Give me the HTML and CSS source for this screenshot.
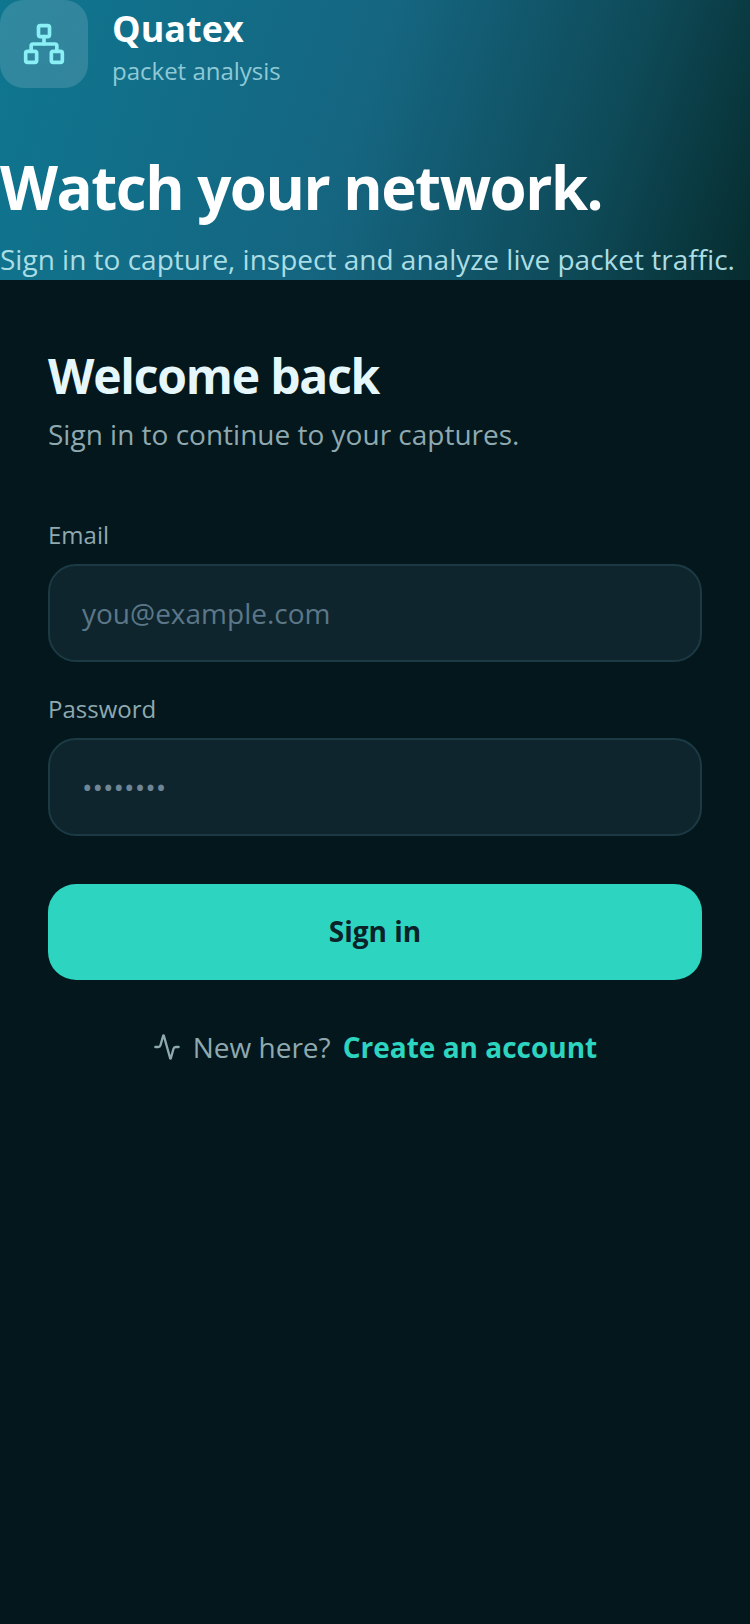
FILE: index.html
```html
<!DOCTYPE html>
<html lang="en">
<head>
    <meta charset="UTF-8">
    <title>Quatex</title>
    <link rel="stylesheet" href="styles.css">
</head>
<body>
    <div class="hero">
        <div class="brand">
            <div class="brandicon">
                <svg width="44" height="44" viewBox="0 0 24 24" fill="none" stroke="#8af0f5" stroke-width="2" stroke-linecap="round" stroke-linejoin="round">
                    <rect x="9" y="2" width="6" height="6" rx="1"></rect>
                    <rect x="16" y="16" width="6" height="6" rx="1"></rect>
                    <rect x="2" y="16" width="6" height="6" rx="1"></rect>
                    <path d="M5 16v-3a1 1 0 0 1 1-1h12a1 1 0 0 1 1 1v3"></path>
                    <path d="M12 12V8"></path>
                </svg>
            </div>
            <div class="brandtext">
                <div class="brandname">Quatex</div>
                <div class="brandsub">packet analysis</div>
            </div>
        </div>
        <div class="herotitle">Watch your network.</div>
        <div class="herosub">Sign in to capture, inspect and analyze live packet traffic.</div>
    </div>

    <div class="form">
        <div class="formtitle">Welcome back</div>
        <div class="formsub">Sign in to continue to your captures.</div>

        <div class="fieldlabel firstlabel">Email</div>
        <div class="fieldinput">you@example.com</div>

        <div class="fieldlabel">Password</div>
        <div class="fieldinput dots">••••••••</div>

        <div class="signinbtn">Sign in</div>

        <div class="signup">
            <svg width="28" height="28" viewBox="0 0 24 24" fill="none" stroke="#8fa9b0" stroke-width="2" stroke-linecap="round" stroke-linejoin="round">
                <path d="M22 12h-2.48a2 2 0 0 0-1.93 1.46l-2.35 8.36a.25.25 0 0 1-.48 0L9.24 2.18a.25.25 0 0 0-.48 0l-2.35 8.36A2 2 0 0 1 4.49 12H2"></path>
            </svg>
            <span class="signupq">New here?</span>
            <span class="signuplink">Create an account</span>
        </div>
    </div>
</body>
</html>
```

FILE: styles.css
```css
html, body{
    margin: 0;
    padding: 0;
}

body{
    width: 750px;
    height: 1624px;
    overflow: hidden;
    background: #04171c;
    font-family: "Open Sans", "Noto Sans", sans-serif;
}

.hero{
    height: 280px;
    box-sizing: border-box;
    background: linear-gradient(108deg, #0f7690 0%, #156580 48%, #0e4a58 78%, #062c2e 100%);
}

.brand{
    display: flex;
    align-items: flex-start;
    height: 88px;
}

.brandicon{
    width: 88px;
    height: 88px;
    border-radius: 24px;
    background: rgba(255, 255, 255, 0.14);
    display: flex;
    align-items: center;
    justify-content: center;
}

.brandtext{
    margin-left: 24px;
}

.brandname{
    font-size: 36px;
    line-height: 58px;
    font-weight: 700;
    color: #ffffff;
}

.brandsub{
    font-size: 24px;
    line-height: 26px;
    color: #8fc9d6;
}

.herotitle{
    margin-top: 63px;
    font-size: 60px;
    line-height: 72px;
    font-weight: 700;
    letter-spacing: -1.5px;
    color: #ffffff;
}

.herosub{
    margin-top: 16px;
    font-size: 28px;
    line-height: 40px;
    color: #aadde4;
    white-space: nowrap;
}

.form{
    padding: 66px 48px 0;
}

.formtitle{
    font-size: 48px;
    line-height: 60px;
    font-weight: 700;
    letter-spacing: -1.2px;
    color: #e6f7fb;
}

.formsub{
    margin-top: 8px;
    font-size: 28px;
    line-height: 40px;
    color: #8fa9b0;
}

.fieldlabel{
    margin-top: 29px;
    font-size: 24px;
    line-height: 36px;
    color: #8fa9b0;
}

.firstlabel{
    margin-top: 63px;
}

.fieldinput{
    margin-top: 11px;
    height: 98px;
    box-sizing: border-box;
    padding: 0 32px;
    border: 2px solid #1c3a44;
    border-radius: 28px;
    background: #0f252d;
    font-size: 28px;
    line-height: 94px;
    color: #5b7788;
}

.dots{
    color: #6f8696;
}

.signinbtn{
    margin-top: 48px;
    height: 96px;
    border-radius: 28px;
    background: #2dd4bf;
    font-size: 28px;
    line-height: 94px;
    font-weight: 700;
    text-align: center;
    color: #0a2228;
}

.signup{
    margin-top: 47px;
    display: flex;
    align-items: center;
    justify-content: center;
    font-size: 28px;
    line-height: 40px;
}

.signupq{
    margin-left: 12px;
    color: #8fa9b0;
}

.signuplink{
    margin-left: 12px;
    font-weight: 700;
    color: #2dd4bf;
}
```
